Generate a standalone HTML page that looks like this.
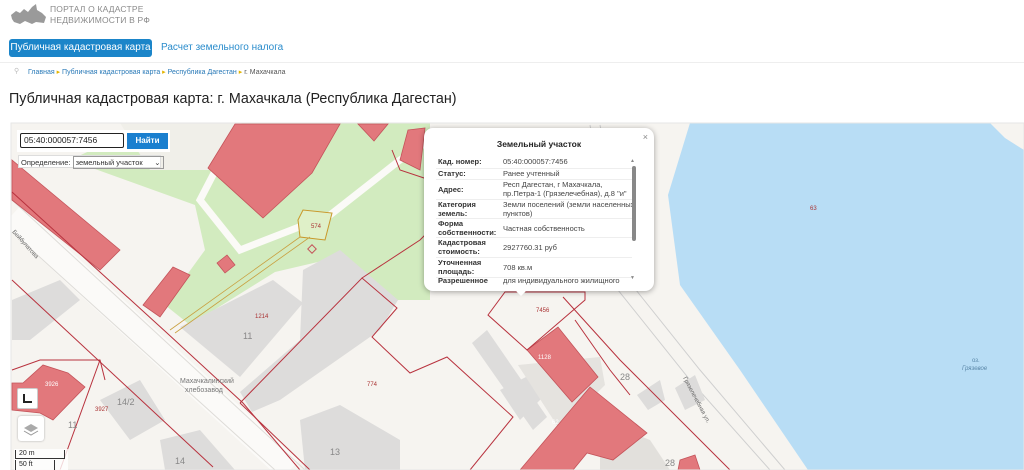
<!DOCTYPE html>
<html><head><meta charset="utf-8"><style>
*{margin:0;padding:0;box-sizing:border-box}
body{width:1024px;height:470px;overflow:hidden;background:#fff;font-family:"Liberation Sans",sans-serif;position:relative}
.a{position:absolute;white-space:nowrap}
.pop{position:absolute;left:424px;top:128px;width:230px;height:163px;background:#fff;border-radius:9px;box-shadow:0 1px 6px rgba(0,0,0,.35);font-size:7.5px;color:#333}
.pop .l{position:absolute;left:14px;font-weight:bold;line-height:9px;color:#333}
.pop .v{position:absolute;left:79px;line-height:9px;color:#444}
.pop .s{position:absolute;left:12px;width:196px;border-top:1px solid #eee}
</style></head><body>
<svg class="a" style="left:10px;top:3px" width="38" height="22" viewBox="0 0 38 22"><path d="M1 12 L6 8 L10 10 L14 6 L18 9 L22 4 L26 1 L27 7 L32 10 L36 14 L34 20 L26 19 L22 21 L15 18 L10 21 L4 19 L2 16Z" fill="#9a9a9a"/></svg>
<div class="a" style="left:50px;top:4px;font-size:8.5px;color:#8a8a8a;letter-spacing:.2px">ПОРТАЛ О КАДАСТРЕ</div>
<div class="a" style="left:50px;top:15px;font-size:8.5px;color:#8a8a8a;letter-spacing:.2px">НЕДВИЖИМОСТИ В РФ</div>
<div class="a" style="left:9px;top:39px;width:143px;height:18px;background:#1b85c9;border-radius:3px;color:#fff;font-size:10px;line-height:18px;text-align:center">Публичная кадастровая карта</div>
<div class="a" style="left:161px;top:42px;font-size:10px;color:#2a8ccc">Расчет земельного налога</div>
<div class="a" style="left:0;top:62px;width:1024px;border-top:1px solid #eee"></div>
<div class="a" style="left:14px;top:67px;font-size:7px;color:#bbb">⚲</div>
<div class="a" style="left:28px;top:68px;font-size:7px;color:#2a7ab8">Главная <span style="color:#e3b400">▸</span> Публичная кадастровая карта <span style="color:#e3b400">▸</span> Республика Дагестан <span style="color:#e3b400">▸</span> <span style="color:#555">г. Махачкала</span></div>
<div class="a" style="left:9px;top:91px;font-size:14.3px;color:#222">Публичная кадастровая карта: г. Махачкала (Республика Дагестан)</div>
<svg class="a" style="left:0;top:0" width="1024" height="470" viewBox="0 0 1024 470">
<defs><clipPath id="c"><rect x="11" y="123" width="1013" height="347"/></clipPath></defs>
<g clip-path="url(#c)">
<rect x="0" y="123" width="1024" height="347" fill="#f6f4f0"/>
<path d="M70 160 L150 123 L430 123 L430 300 L395 300 L335 258 L275 272 L190 325 L165 305 L205 250 L195 205Z" fill="#d2ebbf"/>
<path d="M120 123 L240 123 L220 170 L150 170Z" fill="#f0efe9"/>
<path d="M240 123 L200 200 L240 250 L330 215 L400 160 L430 140" fill="none" stroke="#fbfaf7" stroke-width="7"/>
<path d="M690 123 L990 123 L1005 138 L1024 150 L1024 470 L808 470 L740 370 L680 285 L668 195Z" fill="#b8ddf5"/>
<path d="M12 215 L290 470" stroke="#fbfaf8" stroke-width="26" fill="none"/>
<path d="M12 200 L305 470 M12 232 L275 470" stroke="#dedcd8" stroke-width="1" fill="none"/>
<path d="M600 125 L615 200 L628 280 L700 370 L785 470 M590 125 L605 210 L618 290 L690 380 L770 470" stroke="#cfcfcf" stroke-width="1" fill="none"/>
<g fill="#dddcdb">
<path d="M180 327 L273 280 L303 303 L240 377Z"/>
<path d="M303 270 L340 250 L398 300 L380 330 L280 400 L252 412 L240 392 L300 340Z"/>
<path d="M300 420 L340 405 L400 440 L400 470 L305 470Z"/>
<path d="M160 440 L200 430 L235 470 L165 470Z"/>
<path d="M100 400 L140 380 L165 420 L130 440Z"/>
<path d="M472 343 L487 330 L547 417 L533 430Z"/>
<path d="M500 390 L540 370 L555 385 L520 420Z"/>
<path d="M518 365 L600 357 L605 385 L560 430Z" fill="#e5e3df"/>
<path d="M637 395 L660 380 L665 400 L648 410Z"/>
<path d="M675 388 L695 375 L705 400 L685 410Z"/>
<path d="M600 420 L650 440 L670 470 L600 470Z" fill="#e2e0dc"/>
<path d="M12 300 L60 280 L80 300 L30 340 L12 340Z"/>
</g>
<g fill="#e2787c" stroke="#c4535a" stroke-width=".8">
<path d="M208 168 L235 124 L340 124 L312 173 L263 218Z"/>
<path d="M358 124 L388 124 L374 141Z"/>
<path d="M12 160 L120 250 L100 270 L12 200Z"/>
<path d="M143 305 L160 317 L190 275 L173 267Z"/>
<path d="M217 263 L227 255 L235 265 L225 273Z"/>
<path d="M12 383 L23 383 L43 365 L68 373 L85 387 L53 420 L40 413 L12 410Z"/>
<path d="M527 350 L558 327 L598 377 L572 402Z"/>
<path d="M520 470 L590 387 L647 433 L613 460 L587 453 L573 470Z"/>
<path d="M680 460 L695 455 L700 470 L678 470Z"/>
<path d="M408 130 L425 128 L420 170 L400 160Z"/>
</g>
<g fill="none" stroke="#b8323e" stroke-width="1">
<path d="M12 192 L167 333 L243 403 L300 470"/>
<path d="M12 280 L213 467"/>
<path d="M240 403 L362 278 L397 308 L372 337 L410 373 L447 357 L513 417 L470 470"/>
<path d="M240 403 L310 470"/>
<path d="M488 315 L505 292 L585 292 L585 300 L527 350 Z"/>
<path d="M563 297 L620 360 L700 440 L730 470"/>
<path d="M575 320 L610 370 L630 395"/>
<path d="M12 370 L40 360 L100 360 L105 380 M100 360 L60 470"/>
<path d="M362 278 L420 240 L430 230"/>
<path d="M392 150 L400 170 L430 180"/>
</g>
<path d="M298 220 L303 210 L332 213 L325 240 L300 237Z" fill="#dff0c8" stroke="#c9982a" stroke-width="1"/>
<path d="M300 237 L170 330 M310 237 L175 333" stroke="#c9a040" stroke-width=".8" fill="none"/>
<rect x="309" y="246" width="6" height="6" fill="none" stroke="#c4535a" transform="rotate(45 312 249)"/>
<g font-family="Liberation Sans" font-size="6" fill="#a33">
<text x="311" y="228">574</text><text x="255" y="318">1214</text><text x="367" y="386">774</text>
<text x="538" y="359" fill="#fff">1128</text><text x="552" y="424" fill="#fff">62</text><text x="536" y="312">7456</text>
<text x="45" y="386" fill="#fff">3926</text><text x="95" y="411">3927</text><text x="810" y="210">63</text>
</g>
<g font-family="Liberation Sans" font-size="9" fill="#888">
<text x="243" y="339">11</text><text x="117" y="405">14/2</text><text x="68" y="428">11</text><text x="330" y="455">13</text><text x="175" y="464">14</text><text x="620" y="380">28</text><text x="665" y="466">28</text>
</g>
<text x="180" y="383" font-family="Liberation Sans" font-size="7" fill="#777">Махачкалинский</text>
<text x="185" y="392" font-family="Liberation Sans" font-size="7" fill="#777">хлебозавод</text>
<text x="972" y="362" font-family="Liberation Sans" font-size="6" fill="#5a87a8">оз.</text>
<text x="962" y="370" font-family="Liberation Sans" font-size="6" font-style="italic" fill="#5a87a8">Грязевое</text>
<text x="12" y="232" font-family="Liberation Sans" font-size="6" fill="#666" transform="rotate(48 12 232)">Бейбулатова</text>
<text x="683" y="378" font-family="Liberation Sans" font-size="6" fill="#666" transform="rotate(62 683 378)">Грязелечебная ул.</text>
</g>
<rect x="11" y="123" width="1013" height="347" fill="none" stroke="#e6e6e6"/>
</svg>
<div class="a" style="left:17px;top:130px;width:153px;height:22px;background:#fff"></div>
<div class="a" style="left:20px;top:133px;width:104px;height:15px;border:1.5px solid #222;border-radius:2px;font-size:8.5px;line-height:12px;padding-left:3px;color:#222;background:#fff">05:40:000057:7456</div>
<div class="a" style="left:127px;top:133px;width:41px;height:16px;background:#1a7fcf;color:#fff;font-size:8px;font-weight:bold;line-height:16px;text-align:center">Найти</div>
<div class="a" style="left:18px;top:155px;width:143px;height:13px;background:#fff;border:1px solid #ddd;font-size:7.5px;line-height:11px;padding-left:2px;color:#333">Определение: <span style="display:inline-block;border:1px solid #999;width:91px;padding-left:2px">земельный участок <span style="float:right;padding-right:2px">⌄</span></span></div>
<div class="a" style="left:17px;top:388px;width:21px;height:21px;background:#fff;border:1px solid #ccc;border-radius:2px"><div style="position:absolute;left:5px;top:5px;width:9px;height:9px;border-left:2px solid #222;border-bottom:2px solid #222"></div></div>
<div class="a" style="left:18px;top:416px;width:26px;height:25px;background:#fff;border-radius:3px;box-shadow:0 0 2px #aaa"><svg width="26" height="25"><path d="M6 12 L13 8 L20 12 L13 16Z" fill="#aaa"/><path d="M6 15 L13 19 L20 15" fill="none" stroke="#999"/></svg></div>
<div class="a" style="left:14px;top:449px;width:54px;height:21px;background:rgba(255,255,255,.8)"></div>
<div class="a" style="left:15px;top:450px;width:50px;height:9px;border:1px solid #333;border-top:none;font-size:7px;line-height:8px;padding-left:3px;color:#222">20 m</div>
<div class="a" style="left:15px;top:460px;width:40px;height:10px;border-left:1px solid #333;border-right:1px solid #333;font-size:7px;line-height:9px;padding-left:3px;color:#222">50 ft</div>
<div class="pop">
<div class="a" style="right:6px;top:4px;font-size:9px;color:#888">×</div>
<div class="a" style="left:0;width:100%;top:11px;text-align:center;font-weight:bold;font-size:8.5px;color:#222">Земельный участок</div>
<div class="l" style="top:29px">Кад. номер:</div><div class="v" style="top:29px">05:40:000057:7456</div>
<div class="s" style="top:40px"></div>
<div class="l" style="top:41px">Статус:</div><div class="v" style="top:41px">Ранее учтенный</div>
<div class="s" style="top:51px"></div>
<div class="l" style="top:57px">Адрес:</div><div class="v" style="top:52px">Респ Дагестан, г Махачкала,<br>пр.Петра-1 (Грязелечебная), д.8 "и"</div>
<div class="s" style="top:71px"></div>
<div class="l" style="top:72px">Категория<br>земель:</div><div class="v" style="top:72px">Земли поселений (земли населенных<br>пунктов)</div>
<div class="s" style="top:90px"></div>
<div class="l" style="top:91px">Форма<br>собственности:</div><div class="v" style="top:96px">Частная собственность</div>
<div class="s" style="top:109px"></div>
<div class="l" style="top:110px">Кадастровая<br>стоимость:</div><div class="v" style="top:115px">2927760.31 руб</div>
<div class="s" style="top:129px"></div>
<div class="l" style="top:130px">Уточненная<br>площадь:</div><div class="v" style="top:135px">708 кв.м</div>
<div class="s" style="top:149px"></div>
<div class="l" style="top:148px">Разрешенное</div><div class="v" style="top:148px">для индивидуального жилищного</div>
<div class="a" style="left:206px;top:30px;font-size:5px;color:#888">▲</div>
<div class="a" style="left:208px;top:38px;width:4px;height:75px;background:#888;border-radius:2px"></div>
<div class="a" style="left:206px;top:147px;font-size:5px;color:#888">▼</div>
</div>
<div class="a" style="left:515px;top:290px;width:0;height:0;border-left:6px solid transparent;border-right:6px solid transparent;border-top:6px solid #fff"></div>
</body></html>
